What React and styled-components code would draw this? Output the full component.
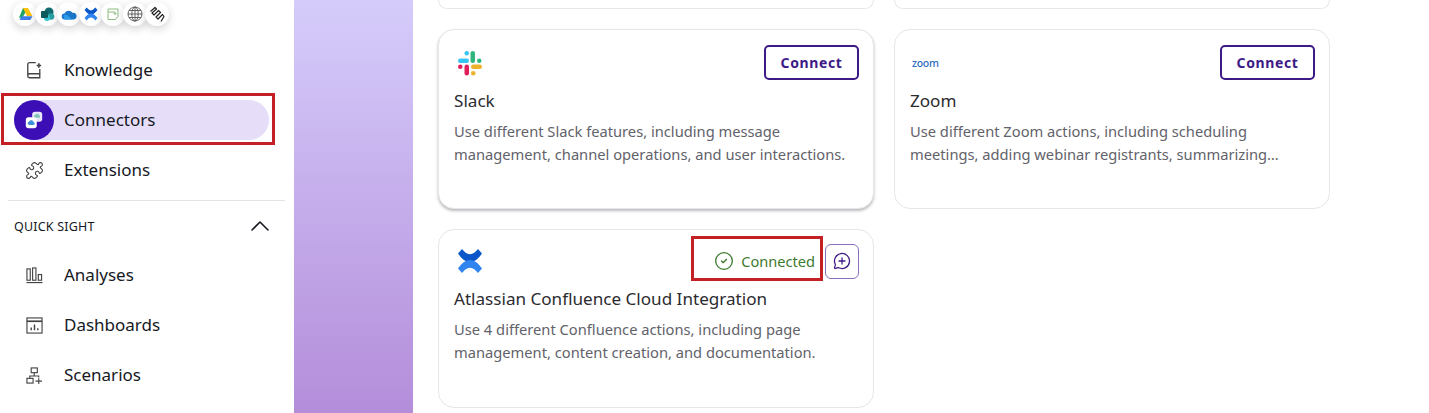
import React from 'react';
import styled, { createGlobalStyle } from 'styled-components';
import { ChevronUp, CircleCheck, MessageCirclePlus, Puzzle } from 'lucide-react';

const GlobalStyle = createGlobalStyle`
  html, body {
    margin: 0;
    background: #fff;
    font-family: "Noto Sans", "Open Sans", sans-serif;
  }
`;

const DriveLogo = () => (
  <svg width="15" height="14" viewBox="0 0 15 14">
    <path d="M5 1h5l-3 5.2-2.6 4.6L1 10.8z" fill="#1fa463" />
    <path d="M5 1h5l4.400 8H9z" fill="#ffc107" />
    <path d="M3.500 9.300h11L12.300 13H1.500z" fill="#3f7ee8" />
  </svg>
);

const SharePointLogo = () => (
  <svg width="15" height="15" viewBox="0 0 15 15">
    <circle cx="9" cy="5" r="4.500" fill="#0f6b6f" />
    <circle cx="11" cy="9.500" r="3.300" fill="#2aa0a4" />
    <circle cx="7" cy="11" r="3" fill="#37c6d0" />
    <rect x="1" y="4" width="7" height="7" rx="1" fill="#0b5a5d" />
  </svg>
);

const OneDriveLogo = () => (
  <svg width="16" height="11" viewBox="0 0 16 11">
    <path d="M4 10.500a3 3 0 0 1-.5-6A4.500 4.500 0 0 1 11.500 3.800 3.400 3.400 0 0 1 12.800 10.500z" fill="#1b75c9" />
    <path d="M4 10.500a3 3 0 0 1 0-5c2 0 3 1 4 2l3 3z" fill="#2f9be8" />
  </svg>
);

const ConfluenceLogo = ({ size = 14 }) => (
  <svg width={size} height={size} viewBox="0 0 26 26">
    <path d="M1 5.500 5 1c2.500 2.800 4.800 5.300 8 5.300S18.500 3.800 21 1l4 4.500c-3 4-6.500 8.500-12 8.500S4 9.500 1 5.500z" fill="#0b57c9" />
    <path d="M1 20.500 5 25c2.500-2.800 4.800-5.300 8-5.300s5.500 2.500 8 5.300l4-4.500c-3-4-6.500-8.500-12-8.500S4 16.500 1 20.500z" fill="#2f84f0" />
  </svg>
);

const BucketLogo = () => (
  <svg width="14" height="14" viewBox="0 0 14 14" fill="none" stroke="#8dbb7d" strokeWidth="1">
    <path d="M2 2h10v7.500L9.500 12.500H2z" />
    <path d="M2 5h7v2.500M7.500 6l1.500 1.500L10.500 6" />
  </svg>
);

const GlobeLogo = () => (
  <svg width="16" height="16" viewBox="0 0 16 16" fill="none" stroke="#555" strokeWidth="0.9">
    <circle cx="8" cy="8" r="7" />
    <ellipse cx="8" cy="8" rx="3.200" ry="7" />
    <path d="M8 1v14M1 8h14M2 4.500h12M2 11.500h12" />
  </svg>
);

const CoilLogo = () => (
  <svg width="17" height="17" viewBox="0 0 17 17" fill="none" stroke="#222" strokeWidth="1.200" strokeLinejoin="round">
    <path d="M1.500 5.500 6 1.500l1.500 1.500L3 7l2 2 4.500-4.500L11.500 6.500 7 11l2 2 4.500-4.500 1.500 2-3 5" />
  </svg>
);

const SlackLogo = () => (
  <svg width="26" height="26" viewBox="0 0 26 26">
    <rect x="1" y="8.500" width="11" height="4.500" rx="2.250" fill="#36c5f0" />
    <rect x="7.500" y="1" width="4.500" height="4.500" rx="2.250" fill="#36c5f0" />
    <rect x="13.500" y="1" width="4.500" height="12" rx="2.250" fill="#2eb67d" />
    <rect x="20" y="8.500" width="4.500" height="4.500" rx="2.250" fill="#2eb67d" />
    <rect x="14" y="14.500" width="11" height="4.500" rx="2.250" fill="#ecb22e" />
    <rect x="14" y="21" width="4.500" height="4.500" rx="2.250" fill="#ecb22e" />
    <rect x="7.500" y="14.500" width="4.500" height="11" rx="2.250" fill="#e01e5a" />
    <rect x="1" y="14.500" width="4.500" height="4.500" rx="2.250" fill="#e01e5a" />
  </svg>
);

const KnowledgeIcon = () => (
  <svg width="16" height="18" viewBox="0 0 18 20" fill="none" stroke="#444" strokeWidth="1.500">
    <path d="M11 1.700H4a2 2 0 0 0-2 2v13a2 2 0 0 0 2 2h11.500v-4.500H4a2 2 0 0 0-2 2" />
    <path d="M15.500 9v5" />
    <path d="M12 5h5M14.500 2.500v5" strokeWidth="1.800" />
  </svg>
);

const AnalysesIcon = () => (
  <svg width="17" height="17" viewBox="0 0 18 18" fill="none" stroke="#444" strokeWidth="1.200">
    <rect x="1" y="2" width="3.500" height="12" />
    <rect x="7" y="1" width="3.500" height="13" />
    <rect x="13" y="8" width="3.500" height="6" />
    <path d="M.5 16.500h17" />
  </svg>
);

const DashboardsIcon = () => (
  <svg width="17" height="17" viewBox="0 0 18 18" fill="none" stroke="#444" strokeWidth="1.200">
    <rect x="1" y="1" width="16" height="16" />
    <path d="M1 4.500h16" strokeWidth="1.800" />
    <path d="M5.500 14v-3M9 14V8M12.500 14v-2" strokeWidth="1.500" />
  </svg>
);

const ScenariosIcon = () => (
  <svg width="17" height="17" viewBox="0 0 18 18" fill="none" stroke="#444" strokeWidth="1.200">
    <rect x="5.500" y="1" width="6.500" height="5" />
    <rect x="1" y="12" width="6.500" height="5" />
    <path d="M8.700 6v3M4 12V9.500h9.500V11M10 15h7M13.500 12v6" />
  </svg>
);

const ConnectorsIcon = () => (
  <svg width="20" height="20" viewBox="0 0 22 22">
    <rect x="9" y="2" width="11" height="11" rx="3" fill="#e9e6f7" />
    <path d="M12 8.500a1.700 1.700 0 0 1 .5-3.200 2.300 2.300 0 0 1 4.300.6 1.400 1.400 0 0 1 0 2.600z" fill="#7fc4b5" />
    <rect x="2" y="8" width="12" height="12" rx="3" fill="#fff" />
    <path d="M5.500 16.500a1.900 1.900 0 0 1 0-3.700 2.700 2.700 0 0 1 5.100.6 1.600 1.600 0 0 1 0 3.100z" fill="#3f8fd6" />
  </svg>
);

const Page = styled.div`
  display: grid;
  grid-template-columns: 294px 119px 1fr;
  height: 413px;
  overflow: hidden;
  background: #fff;
`;

const Sidebar = styled.aside`
  display: flex;
  flex-direction: column;
  padding-top: 2px;
  color: #16191f;
`;

const LogoStack = styled.div`
  display: flex;
  height: 24px;
  padding-left: 13px;
`;

const LogoBubble = styled.span`
  display: flex;
  align-items: center;
  justify-content: center;
  flex: none;
  width: 24px;
  height: 24px;
  margin-right: -2px;
  border-radius: 50%;
  background: #fff;
  box-shadow: 0 3px 9px rgba(40, 40, 60, 0.2);
`;

const NavList = styled.nav`
  display: flex;
  flex-direction: column;
  gap: 10px;
  margin-top: ${(p) => p.$top}px;
`;

const NavItem = styled.a`
  position: relative;
  display: flex;
  align-items: center;
  gap: 10px;
  width: 255px;
  height: 40px;
  margin-left: 14px;
  border-radius: 20px;
  background: ${(p) => (p.$active ? '#e6def9' : 'transparent')};
  font-size: 17px;
  line-height: 24px;
`;

const NavIcon = styled.span`
  display: flex;
  align-items: center;
  justify-content: center;
  flex: none;
  width: 40px;
  height: 40px;
  border-radius: 50%;
  background: ${(p) => (p.$active ? '#3b0fb5' : 'transparent')};
`;

const RedMark = styled.span`
  position: absolute;
  top: -7px;
  right: -6px;
  bottom: -5px;
  left: -13px;
  border: 3px solid #c42127;
  pointer-events: none;
`;

const Divider = styled.hr`
  width: 277px;
  margin: 10px 0 0 8px;
  border: 0;
  border-top: 1px solid #e3e3e6;
`;

const SectionHead = styled.div`
  display: flex;
  align-items: center;
  justify-content: space-between;
  height: 30px;
  margin-top: 10px;
  padding: 0 18px 0 14px;
  font-size: 12.5px;
  letter-spacing: 0.2px;
`;

const Backdrop = styled.div`
  background: linear-gradient(180deg, #d5ccfb 0%, #b48dda 100%);
`;

const Main = styled.main`
  display: grid;
  grid-template-columns: repeat(2, 436px);
  grid-template-rows: 9px 180px 179px;
  gap: 20px;
  align-content: start;
  padding-left: 25px;
`;

const CutCard = styled.div`
  border: 1px solid #e6e6ea;
  border-top: 0;
  border-radius: 0 0 16px 16px;
`;

const Card = styled.article`
  display: flex;
  flex-direction: column;
  box-sizing: border-box;
  padding: ${(p) => (p.$tight ? 14 : 15)}px 14px 0 15px;
  border: 1px solid #e6e6ea;
  border-radius: 16px;
  background: #fff;
  box-shadow: ${(p) => (p.$raised ? '0 2px 3px rgba(30, 30, 40, 0.3)' : 'none')};
`;

const CardTop = styled.div`
  display: flex;
  align-items: center;
  justify-content: space-between;
  height: ${(p) => (p.$tight ? 34 : 35)}px;
`;

const LogoSlot = styled.span`
  display: flex;
  align-items: center;
  padding-left: 3px;
`;

const ZoomMark = styled.span`
  margin-left: -1px;
  color: #2d6cc0;
  font-size: 10.5px;
  font-weight: 500;
  letter-spacing: -0.3px;
`;

const ConnectButton = styled.button`
  box-sizing: border-box;
  width: 95px;
  height: 35px;
  padding: 0;
  border: 2px solid #3d1a85;
  border-radius: 5px;
  background: #fff;
  color: #3d1a85;
  font-family: inherit;
  font-size: 14px;
  font-weight: 700;
  letter-spacing: 0.6px;
`;

const StatusGroup = styled.div`
  display: flex;
  align-items: center;
  gap: 2px;
`;

const Status = styled.span`
  display: flex;
  align-items: center;
  justify-content: flex-end;
  gap: 7px;
  box-sizing: border-box;
  width: 132px;
  height: 45px;
  margin-top: -5px;
  padding: 5px 5px 0 0;
  border: 3px solid #c42127;
  color: #3d7a2e;
  font-size: 14.6px;
`;

const ChatButton = styled.button`
  display: flex;
  align-items: center;
  justify-content: center;
  box-sizing: border-box;
  width: 34px;
  height: 35px;
  padding: 0;
  border: 1px solid #8a6fb8;
  border-radius: 6px;
  background: #fff;
  color: #3d1a85;
`;

const CardTitle = styled.h3`
  margin: 9px 0 0;
  color: #2b2b30;
  font-size: 17.1px;
  font-weight: 400;
  line-height: 24px;
`;

const CardText = styled.p`
  margin: 7px 0 0;
  color: #62626a;
  font-size: 14.7px;
  line-height: 23px;
`;

const topNav = [
  { label: 'Knowledge', icon: <KnowledgeIcon /> },
  { label: 'Connectors', icon: <ConnectorsIcon />, active: true },
  { label: 'Extensions', icon: <Puzzle size={19} color="#444" strokeWidth={1.4} /> },
];

const quickNav = [
  { label: 'Analyses', icon: <AnalysesIcon /> },
  { label: 'Dashboards', icon: <DashboardsIcon /> },
  { label: 'Scenarios', icon: <ScenariosIcon /> },
];

function NavRow({ item }) {
  return (
    <NavItem $active={item.active}>
      <NavIcon $active={item.active}>{item.icon}</NavIcon>
      {item.label}
      {item.active && <RedMark />}
    </NavItem>
  );
}

export default function App() {
  return (
    <>
      <GlobalStyle />
      <Page>
        <Sidebar>
          <LogoStack>
            <LogoBubble><DriveLogo /></LogoBubble>
            <LogoBubble><SharePointLogo /></LogoBubble>
            <LogoBubble><OneDriveLogo /></LogoBubble>
            <LogoBubble><ConfluenceLogo /></LogoBubble>
            <LogoBubble><BucketLogo /></LogoBubble>
            <LogoBubble><GlobeLogo /></LogoBubble>
            <LogoBubble><CoilLogo /></LogoBubble>
          </LogoStack>
          <NavList $top={24}>
            {topNav.map((item) => <NavRow key={item.label} item={item} />)}
          </NavList>
          <Divider />
          <SectionHead>
            QUICK SIGHT
            <ChevronUp size={32} strokeWidth={1.2} />
          </SectionHead>
          <NavList $top={14}>
            {quickNav.map((item) => <NavRow key={item.label} item={item} />)}
          </NavList>
        </Sidebar>
        <Backdrop />
        <Main>
          <CutCard />
          <CutCard />
          <Card $raised>
            <CardTop>
              <LogoSlot><SlackLogo /></LogoSlot>
              <ConnectButton>Connect</ConnectButton>
            </CardTop>
            <CardTitle>Slack</CardTitle>
            <CardText>
              Use different Slack features, including message management, channel operations, and user interactions.
            </CardText>
          </Card>
          <Card>
            <CardTop>
              <LogoSlot><ZoomMark>zoom</ZoomMark></LogoSlot>
              <ConnectButton>Connect</ConnectButton>
            </CardTop>
            <CardTitle>Zoom</CardTitle>
            <CardText>
              Use different Zoom actions, including scheduling meetings, adding webinar registrants, summarizing…
            </CardText>
          </Card>
          <Card $tight>
            <CardTop $tight>
              <LogoSlot><ConfluenceLogo size={26} /></LogoSlot>
              <StatusGroup>
                <Status>
                  <CircleCheck size={20} strokeWidth={1.6} />
                  Connected
                </Status>
                <ChatButton><MessageCirclePlus size={18} strokeWidth={1.7} /></ChatButton>
              </StatusGroup>
            </CardTop>
            <CardTitle>Atlassian Confluence Cloud Integration</CardTitle>
            <CardText>
              Use 4 different Confluence actions, including page management, content creation, and documentation.
            </CardText>
          </Card>
        </Main>
      </Page>
    </>
  );
}
